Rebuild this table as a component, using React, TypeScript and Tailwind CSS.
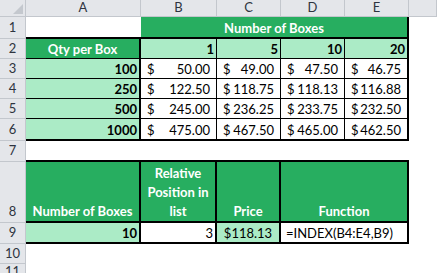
import React from "react";

const HDR =
  "flex items-center justify-center bg-[#e4e6ea] text-[#2e3440] text-[13px] border-r border-b border-[#c3c7cd]";

function Acc({ v, last, bottom2 }: { v: string; last?: boolean; bottom2?: boolean }) {
  const cls =
    "flex items-end justify-between leading-[15px] pb-[1px] px-[6px] bg-white text-black border-black " +
    (last ? "border-r-2 " : "border-r ") +
    (bottom2 ? "border-b-2" : "border-b");
  return (
    <div className={cls}>
      <span>$</span>
      <span>{v}</span>
    </div>
  );
}

export default function App() {
  const rows: { n: string; vals: string[] }[] = [
    { n: "100", vals: ["50.00", "49.00", "47.50", "46.75"] },
    { n: "250", vals: ["122.50", "118.75", "118.13", "116.88"] },
    { n: "500", vals: ["245.00", "236.25", "233.75", "232.50"] },
    { n: "1000", vals: ["475.00", "467.50", "465.00", "462.50"] },
  ];
  return (
    <div className="w-[437px] h-[273px] overflow-hidden bg-white font-[Lato] text-[13px]">
      <div className="grid grid-cols-[26px_115px_76px_64px_64px_64px_28px] grid-rows-[17px_22px_20px_20px_20px_20px_22px_21px_61px_21px_20px_9px] h-[273px]">
        {/* column headers */}
        <div className="relative bg-[#e4e6ea] border-r border-b border-[#c3c7cd]">
          <svg className="absolute left-0 top-0" width="26" height="17" viewBox="0 0 26 17">
            <polygon points="23,4 23,14 13,14" fill="#c4c8ce" />
          </svg>
        </div>
        <div className={HDR}>A</div>
        <div className={HDR}>B</div>
        <div className={HDR}>C</div>
        <div className={HDR}>D</div>
        <div className={HDR}>E</div>
        <div className={HDR}></div>

        {/* row 1 */}
        <div className={HDR}>1</div>
        <div className="bg-white border-b-2 border-black"></div>
        <div className="col-span-4 flex items-end justify-center leading-[15px] pb-[1px] bg-[#27ae60] text-white font-bold border-b-2 border-r-2 border-black">
          Number of Boxes
        </div>
        <div className="bg-white"></div>

        {/* row 2 */}
        <div className={HDR}>2</div>
        <div className="flex items-end justify-center leading-[15px] pb-[1px] bg-[#27ae60] text-white font-bold border-r-2 border-b border-black">
          Qty per Box
        </div>
        <div className="flex items-end justify-end leading-[15px] pb-[1px] pr-[2px] bg-[#abebc6] text-black font-bold border-r border-b border-black">1</div>
        <div className="flex items-end justify-end leading-[15px] pb-[1px] pr-[2px] bg-[#abebc6] text-black font-bold border-r border-b border-black">5</div>
        <div className="flex items-end justify-end leading-[15px] pb-[1px] pr-[2px] bg-[#abebc6] text-black font-bold border-r border-b border-black">10</div>
        <div className="flex items-end justify-end leading-[15px] pb-[1px] pr-[2px] bg-[#abebc6] text-black font-bold border-r-2 border-b border-black">20</div>
        <div className="bg-white"></div>

        {/* rows 3-6 */}
        {rows.map((r, i) => {
          const lastRow = i === rows.length - 1;
          return (
            <React.Fragment key={r.n}>
              <div className={HDR}>{i + 3}</div>
              <div
                className={
                  "flex items-end justify-end leading-[15px] pb-[1px] pr-[2px] bg-[#abebc6] text-black font-bold border-r-2 border-black " +
                  (lastRow ? "border-b-2" : "border-b")
                }
              >
                {r.n}
              </div>
              <Acc v={r.vals[0]} bottom2={lastRow} />
              <Acc v={r.vals[1]} bottom2={lastRow} />
              <Acc v={r.vals[2]} bottom2={lastRow} />
              <Acc v={r.vals[3]} bottom2={lastRow} last />
              <div className="bg-white"></div>
            </React.Fragment>
          );
        })}

        {/* row 7 */}
        <div className={HDR}>7</div>
        <div className="col-span-5 bg-white border-b-2 border-black"></div>
        <div className="bg-white"></div>

        {/* row 8 */}
        <div className="flex items-end justify-center pb-[1px] leading-[19px] bg-[#e4e6ea] text-[#2e3440] text-[13px] border-r border-b border-[#c3c7cd]">8</div>
        <div className="flex items-end justify-center leading-[19px] bg-[#27ae60] text-white font-bold border-r-2 border-b-2 border-black whitespace-nowrap">
          Number of Boxes
        </div>
        <div className="flex items-end justify-center text-center leading-[19px] bg-[#27ae60] text-white font-bold border-r-2 border-b-2 border-black px-[2px]">
          Relative Position in list
        </div>
        <div className="flex items-end justify-center leading-[19px] bg-[#27ae60] text-white font-bold border-r-2 border-b-2 border-black">
          Price
        </div>
        <div className="col-span-2 flex items-end justify-center leading-[19px] bg-[#27ae60] text-white font-bold border-r-2 border-b-2 border-black">
          Function
        </div>
        <div className="bg-white"></div>

        {/* row 9 */}
        <div className={HDR}>9</div>
        <div className="flex items-end justify-end leading-[15px] pb-[1px] pr-[2px] bg-[#abebc6] text-black font-bold border-r-2 border-b-2 border-black">10</div>
        <div className="flex items-end justify-end leading-[15px] pb-[1px] pr-[2px] bg-white text-black border-r-2 border-b-2 border-black">3</div>
        <div className="flex items-end justify-center leading-[15px] pb-[1px] bg-[#abebc6] text-black border-r-2 border-b-2 border-black">$118.13</div>
        <div className="col-span-2 flex items-end justify-start leading-[15px] pb-[1px] pl-[5px] bg-white text-black border-r-2 border-b-2 border-black whitespace-nowrap">
          =INDEX(B4:E4,B9)
        </div>
        <div className="bg-white"></div>

        {/* row 10 */}
        <div className={HDR}>10</div>
        <div className="col-span-6 bg-white"></div>

        {/* row 11 */}
        <div className="flex items-start justify-center bg-[#e4e6ea] text-[#2e3440] text-[13px] leading-[15px] border-r border-[#c3c7cd] overflow-hidden">11</div>
        <div className="col-span-6 bg-white"></div>
      </div>
    </div>
  );
}
